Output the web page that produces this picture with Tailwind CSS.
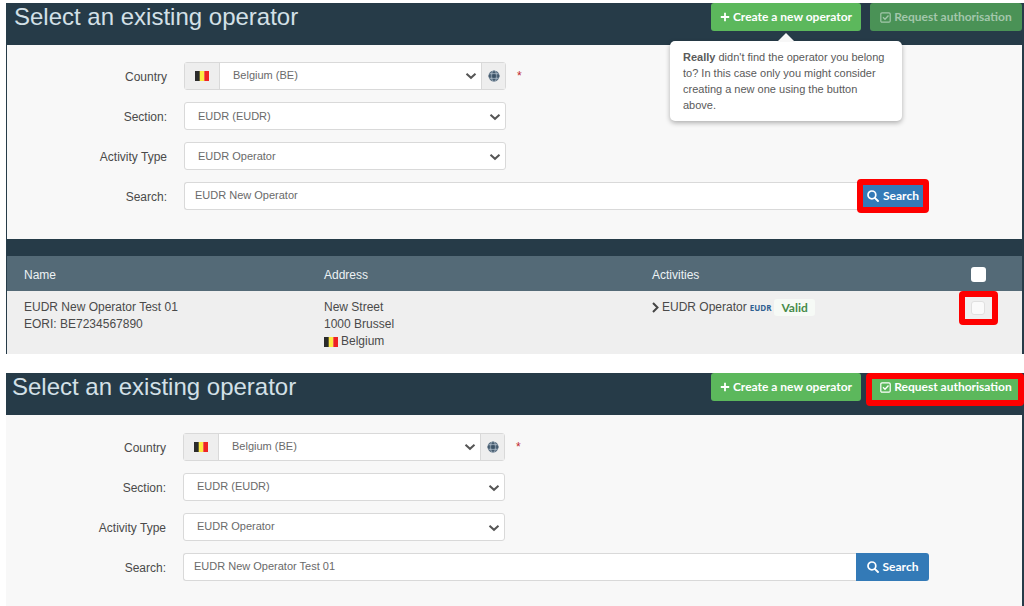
<!DOCTYPE html>
<html lang="en">
<head>
  <meta charset="UTF-8" />
  <meta name="viewport" content="width=device-width, initial-scale=1" />
  <title>Select an existing operator</title>
  <script src="https://cdn.jsdelivr.net/npm/@tailwindcss/browser@4"></script>
</head>
<body class="bg-white font-['Liberation_Sans',sans-serif] text-[12px] text-[#4a4a4a] overflow-x-hidden">
  <!-- shared icons -->
  <svg class="hidden" aria-hidden="true">
    <symbol id="flag-be" viewBox="0 0 14 10">
      <path fill="#2b2b2b" d="M0 0h5v10H0z" />
      <path fill="#fdea42" d="M4.7 0h4.6v10H4.7z" />
      <path fill="#ee2424" d="M9.3 0H14v10H9.3z" />
    </symbol>
    <symbol id="chevron" viewBox="0 0 12 8">
      <path d="M1.5 1.8 6 5.8l4.500-4" fill="none" stroke="currentColor" stroke-width="2" />
    </symbol>
    <symbol id="globe" viewBox="0 0 12 12">
      <circle cx="6" cy="6" r="5.500" fill="#5b7083" />
      <path d="M6 .5v11M.5 6h11" fill="none" stroke="#33485c" stroke-width="1" />
      <path d="M1.500 3.500h9M1.500 8.500h9" fill="none" stroke="#b4c1cc" stroke-width=".6" />
      <ellipse cx="6" cy="6" rx="2.700" ry="5.400" fill="none" stroke="#b4c1cc" stroke-width=".6" />
    </symbol>
    <symbol id="plus" viewBox="0 0 10 10">
      <path d="M5 .8v8.400M.8 5h8.400" stroke="currentColor" stroke-width="1.800" />
    </symbol>
    <symbol id="check-square" viewBox="0 0 11 11">
      <rect x=".8" y=".8" width="9.400" height="9.400" rx="1.200" fill="none" stroke="currentColor" stroke-width="1.200" />
      <path d="m3 5.300 2 2 3.500-3.800" fill="none" stroke="currentColor" stroke-width="1.300" />
    </symbol>
    <symbol id="search" viewBox="0 0 12 12">
      <circle cx="4.900" cy="4.900" r="3.900" fill="none" stroke="currentColor" stroke-width="1.700" />
      <path d="m7.800 7.800 3.200 3.200" stroke="currentColor" stroke-width="1.900" stroke-linecap="round" />
    </symbol>
  </svg>

  <main class="pl-[6px] pt-[3px] flex flex-col gap-[19px]">

    <section class="bg-[#263b48] border-l border-r-2 border-[#263b48]">
      <header class="h-[42px] pl-[7px] flex items-start justify-between">
        <h1 class="text-2xl leading-[28px] text-[#d3e0e7]">Select an existing operator</h1>
        <div class="flex gap-[9px] font-['Lato',sans-serif] font-bold text-white">
          <div class="relative">
            <button type="button" aria-describedby="createTip" class="h-[28px] w-[150px] flex items-center justify-center gap-[3px] rounded-[3px] bg-[#5cb85c]">
              <svg class="size-[10px]"><use href="#plus" /></svg>Create a new operator
            </button>
            <div id="createTip" role="tooltip" class="absolute z-10 top-[38px] left-1/2 -translate-x-1/2 w-[232px] px-[13px] py-2 rounded-[5px] bg-white shadow-[0_2px_5px_rgba(0,0,0,0.3)] font-['Liberation_Sans',sans-serif] font-normal text-[11px] leading-[16px] text-[#5a5a5a]">
              <svg class="absolute -top-[8px] left-1/2 -translate-x-1/2 w-[18px] h-[9px]" viewBox="0 0 18 9"><path d="M0 9 9 0l9 9z" fill="#f7f7f7" /></svg>
              <b>Really</b> didn't find the operator you belong to? In this case only you might consider creating a new one using the button above.
            </div>
          </div>
          <button type="button" disabled class="h-[28px] w-[152px] flex items-center justify-center gap-[3px] rounded-[3px] bg-[#4a9256] text-[#a3c7ab]">
            <svg class="size-[11px]"><use href="#check-square" /></svg>Request authorisation
          </button>
        </div>
      </header>

      <form class="bg-[#f8f8f8] pt-[17px] pb-[29px] flex flex-col gap-3">
        <div class="flex items-center gap-[17px]">
          <label for="country1" class="w-[160px] text-right pt-0.5">Country</label>
          <div class="flex w-[322px] h-[28px] border border-[#d9d9d9] rounded-[3px] bg-white text-[11px] text-[#6a6a6a]">
            <span class="w-[35px] flex items-center justify-center bg-[#eee] border-r border-[#d9d9d9]"><svg class="w-[14px] h-[10px]"><use href="#flag-be" /></svg></span>
            <div class="relative flex-1">
              <select id="country1" class="appearance-none w-full h-full pl-[13px] pb-0.5"><option>Belgium (BE)</option></select>
              <svg class="absolute right-[4px] top-[9px] w-[12px] h-[8px] text-[#555] pointer-events-none"><use href="#chevron" /></svg>
            </div>
            <button type="button" aria-label="All countries" class="w-[24px] flex items-center justify-center bg-[#eee] border-l border-[#d9d9d9]"><svg class="size-[12px]"><use href="#globe" /></svg></button>
          </div>
          <span class="-ml-[6px] text-[#c1272d]">*</span>
        </div>
        <div class="flex items-center gap-[17px]">
          <label for="section1" class="w-[160px] text-right pt-0.5">Section:</label>
          <div class="relative w-[322px] h-[28px]">
            <select id="section1" class="appearance-none w-full h-full pl-[13px] border border-[#d9d9d9] rounded-[3px] bg-white text-[11px] text-[#6a6a6a]"><option>EUDR (EUDR)</option></select>
            <svg class="absolute right-[5px] top-[11px] w-[12px] h-[8px] text-[#555] pointer-events-none"><use href="#chevron" /></svg>
          </div>
        </div>
        <div class="flex items-center gap-[17px]">
          <label for="activity1" class="w-[160px] text-right pt-0.5">Activity Type</label>
          <div class="relative w-[322px] h-[28px]">
            <select id="activity1" class="appearance-none w-full h-full pl-[13px] border border-[#d9d9d9] rounded-[3px] bg-white text-[11px] text-[#6a6a6a]"><option>EUDR Operator</option></select>
            <svg class="absolute right-[5px] top-[11px] w-[12px] h-[8px] text-[#555] pointer-events-none"><use href="#chevron" /></svg>
          </div>
        </div>
        <div class="flex items-center gap-[17px]">
          <label for="search1" class="w-[160px] text-right pt-0.5">Search:</label>
          <div class="flex flex-1 h-[28px] mr-[93px]">
            <input id="search1" type="text" value="EUDR New Operator" class="flex-1 min-w-0 pl-[10px] pb-0.5 border border-r-0 border-[#d9d9d9] rounded-l-[3px] bg-white text-[11px] text-[#6a6a6a]" />
            <div class="relative">
              <button type="submit" class="h-full w-[72px] flex items-center justify-center gap-1 rounded-r-[3px] bg-[#337ab7] font-['Lato',sans-serif] font-bold text-white"><svg class="size-[12px]"><use href="#search" /></svg>Search</button>
              <span class="absolute inset-x-0 -inset-y-[3px] border-[6px] border-[#fe0000] rounded-[4px] pointer-events-none"></span>
            </div>
          </div>
        </div>
      </form>

      <table class="mt-[17px] w-full table-fixed text-left">
        <colgroup>
          <col class="w-[300px]" />
          <col class="w-[328px]" />
          <col />
          <col class="w-[88px]" />
        </colgroup>
        <thead class="bg-[#546a77] text-[#edf2f5]">
          <tr class="h-[35px]">
            <th class="pl-[17px] pt-0.5 font-normal">Name</th>
            <th class="pl-[17px] pt-0.5 font-normal">Address</th>
            <th class="pl-[17px] pt-0.5 font-normal">Activities</th>
            <th class="pt-0.5"><input type="checkbox" aria-label="Select all operators" class="appearance-none block mx-auto size-[15px] rounded-[3px] bg-white" /></th>
          </tr>
        </thead>
        <tbody class="bg-[#efefef] leading-[17px] align-top">
          <tr>
            <td class="pl-[17px] pt-2">EUDR New Operator Test 01<br />EORI: BE7234567890</td>
            <td class="pl-[17px] pt-2 pb-1">
              New Street<br />1000 Brussel
              <div class="flex items-center gap-[3px]"><svg class="w-[14px] h-[10px]"><use href="#flag-be" /></svg>Belgium</div>
            </td>
            <td class="pl-[17px] pt-2">
              <div class="flex items-center gap-[3px]">
                <svg class="w-[7px] h-[11px]" viewBox="0 0 7 11"><path d="m1 1 4.500 4.500L1 10" fill="none" stroke="#444" stroke-width="2" /></svg>
                <span>EUDR Operator</span>
                <span class="font-['Open_Sans',sans-serif] font-bold text-[8px] text-[#2f6091]">EUDR</span>
                <span class="px-[7px] rounded-[3px] bg-[#f6faf6] font-['Lato',sans-serif] font-bold text-[12px] text-[#468a49]">Valid</span>
              </div>
            </td>
            <td>
              <div class="relative w-[39px] h-[34px] mx-auto flex items-center justify-center border-[6px] border-[#fe0000] rounded-[4px]">
                <input type="checkbox" aria-label="Select EUDR New Operator Test 01" class="appearance-none size-[14px] rounded-[3px] border border-[#e0e0e0] bg-[#fafafa]" />
              </div>
            </td>
          </tr>
        </tbody>
      </table>
    </section>

    <section class="bg-[#263b48] border-r-2 border-[#263b48]">
      <header class="h-[42px] pl-[6px] flex items-start justify-between">
        <h1 class="text-2xl leading-[28px] text-[#d3e0e7]">Select an existing operator</h1>
        <div class="flex gap-[9px] font-['Lato',sans-serif] font-bold text-white">
          <button type="button" class="h-[28px] w-[150px] flex items-center justify-center gap-[3px] rounded-[3px] bg-[#5cb85c]">
            <svg class="size-[10px]"><use href="#plus" /></svg>Create a new operator
          </button>
          <div class="relative">
            <button type="button" class="h-[28px] w-[152px] flex items-center justify-center gap-[3px] rounded-[3px] bg-[#5cb85c]">
              <svg class="size-[11px]"><use href="#check-square" /></svg>Request authorisation
            </button>
            <span class="absolute top-0 -bottom-[5px] -left-[4px] -right-[2px] border-[6px] border-[#fe0000] rounded-[4px] pointer-events-none"></span>
          </div>
        </div>
      </header>

      <form class="bg-[#f8f8f8] pt-[18px] pb-[29px] flex flex-col gap-3">
        <div class="flex items-center gap-[17px]">
          <label for="country2" class="w-[160px] text-right pt-0.5">Country</label>
          <div class="flex w-[322px] h-[28px] border border-[#d9d9d9] rounded-[3px] bg-white text-[11px] text-[#6a6a6a]">
            <span class="w-[35px] flex items-center justify-center bg-[#eee] border-r border-[#d9d9d9]"><svg class="w-[14px] h-[10px]"><use href="#flag-be" /></svg></span>
            <div class="relative flex-1">
              <select id="country2" class="appearance-none w-full h-full pl-[13px] pb-0.5"><option>Belgium (BE)</option></select>
              <svg class="absolute right-[4px] top-[9px] w-[12px] h-[8px] text-[#555] pointer-events-none"><use href="#chevron" /></svg>
            </div>
            <button type="button" aria-label="All countries" class="w-[24px] flex items-center justify-center bg-[#eee] border-l border-[#d9d9d9]"><svg class="size-[12px]"><use href="#globe" /></svg></button>
          </div>
          <span class="-ml-[6px] text-[#c1272d]">*</span>
        </div>
        <div class="flex items-center gap-[17px]">
          <label for="section2" class="w-[160px] text-right pt-0.5">Section:</label>
          <div class="relative w-[322px] h-[28px]">
            <select id="section2" class="appearance-none w-full h-full pl-[13px] pb-0.5 border border-[#d9d9d9] rounded-[3px] bg-white text-[11px] text-[#6a6a6a]"><option>EUDR (EUDR)</option></select>
            <svg class="absolute right-[5px] top-[11px] w-[12px] h-[8px] text-[#555] pointer-events-none"><use href="#chevron" /></svg>
          </div>
        </div>
        <div class="flex items-center gap-[17px]">
          <label for="activity2" class="w-[160px] text-right pt-0.5">Activity Type</label>
          <div class="relative w-[322px] h-[28px]">
            <select id="activity2" class="appearance-none w-full h-full pl-[13px] pb-0.5 border border-[#d9d9d9] rounded-[3px] bg-white text-[11px] text-[#6a6a6a]"><option>EUDR Operator</option></select>
            <svg class="absolute right-[5px] top-[11px] w-[12px] h-[8px] text-[#555] pointer-events-none"><use href="#chevron" /></svg>
          </div>
        </div>
        <div class="flex items-center gap-[17px]">
          <label for="search2" class="w-[160px] text-right pt-0.5">Search:</label>
          <div class="flex flex-1 h-[28px] mr-[93px]">
            <input id="search2" type="text" value="EUDR New Operator Test 01" class="flex-1 min-w-0 pl-[10px] pb-0.5 border border-r-0 border-[#d9d9d9] rounded-l-[3px] bg-white text-[11px] text-[#6a6a6a]" />
            <button type="submit" class="h-full w-[73px] flex items-center justify-center gap-1 rounded-r-[3px] bg-[#337ab7] font-['Lato',sans-serif] font-bold text-white"><svg class="size-[12px]"><use href="#search" /></svg>Search</button>
          </div>
        </div>
      </form>
    </section>

  </main>
</body>
</html>
